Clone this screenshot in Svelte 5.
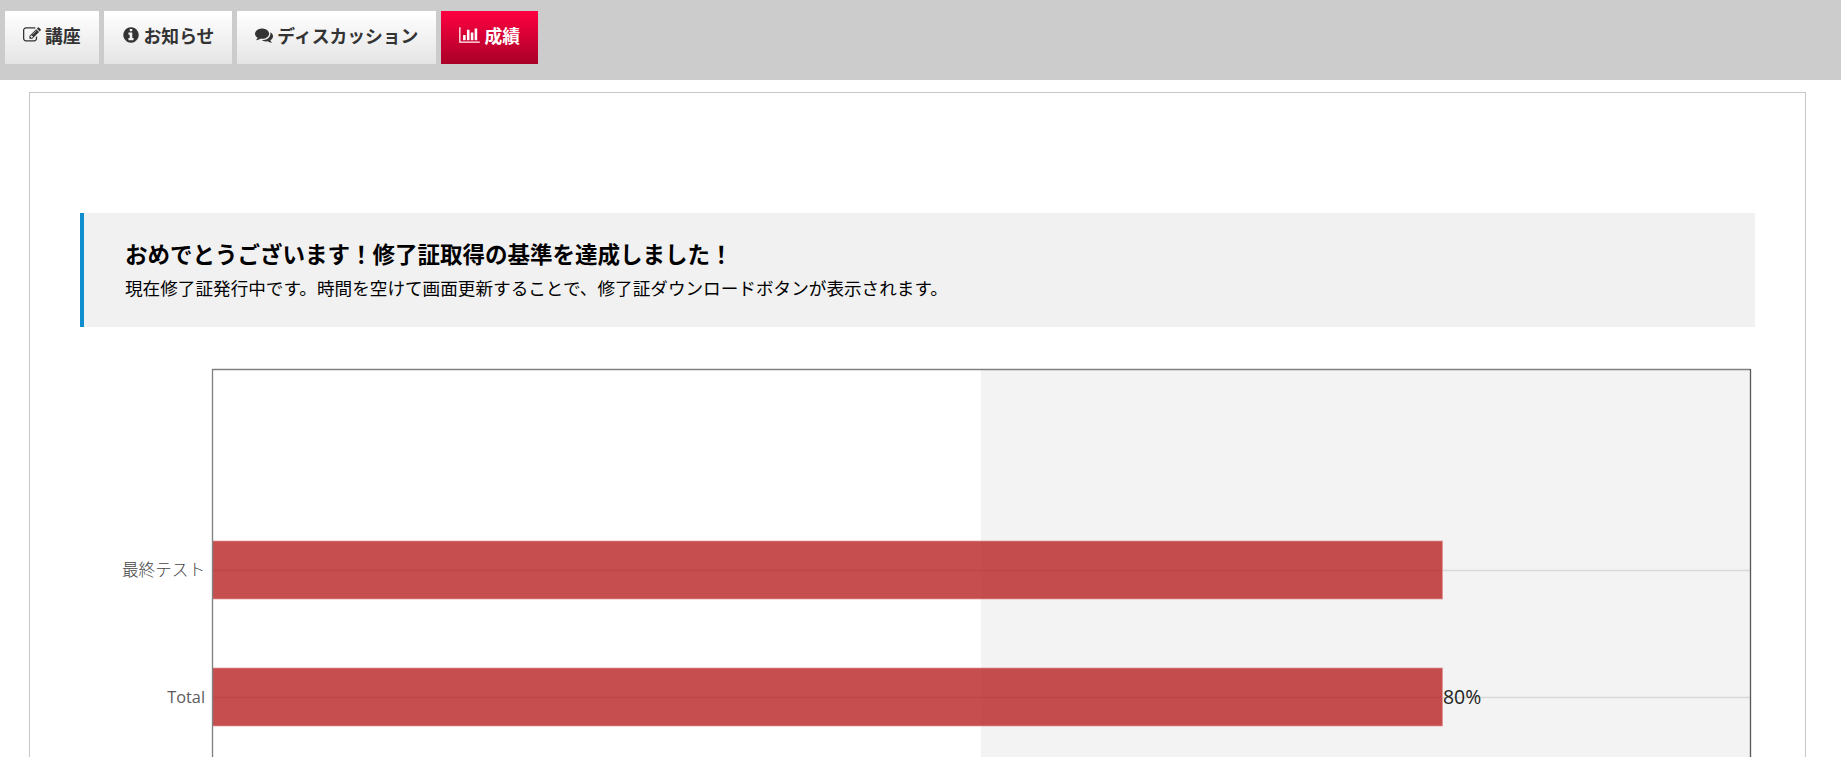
<script>
    const tabs = [
        { label: "講座", icon: "edit" },
        { label: "お知らせ", icon: "info" },
        { label: "ディスカッション", icon: "comments" },
        { label: "成績", icon: "chart", active: true },
    ];

    const icons = {
        edit: { box: "0 0 1792 1792", d: "M888 1184l116-116-152-152-116 116v56h96v96h56zm440-720q-16-16-33 1l-350 350q-17 17-1 33t33-1l350-350q17-17 1-33zm80 594v190q0 119-84.5 203.5t-203.5 84.5h-832q-119 0-203.5-84.5t-84.5-203.5v-832q0-119 84.5-203.5t203.5-84.5h832q63 0 117 25 15 7 18 23 3 17-9 29l-49 49q-14 14-32 8-23-6-45-6h-832q-66 0-113 47t-47 113v832q0 66 47 113t113 47h832q66 0 113-47t47-113v-126q0-13 9-22l64-64q15-15 35-7t20 29zm-96-738l288 288-672 672h-288v-288zm444 132l-92 92-288-288 92-92q28-28 68-28t68 28l152 152q28 28 28 68t-28 68z" },
        info: { box: "0 0 1792 1792", d: "M1152 1376v-160q0-14-9-23t-23-9h-96v-512q0-14-9-23t-23-9h-320q-14 0-23 9t-9 23v160q0 14 9 23t23 9h96v320h-96q-14 0-23 9t-9 23v160q0 14 9 23t23 9h448q14 0 23-9t9-23zm-128-896v-160q0-14-9-23t-23-9h-192q-14 0-23 9t-9 23v160q0 14 9 23t23 9h192q14 0 23-9t9-23zm640 416q0 209-103 385.5t-279.5 279.5-385.5 103-385.5-103-279.5-279.5-103-385.5 103-385.5 279.5-279.5 385.5-103 385.5 103 279.5 279.5 103 385.5z" },
        comments: { box: "0 0 1792 1792", d: "M1408 768q0 139-94 257t-256.5 186.5-353.5 68.5q-86 0-176-16-124 88-278 128-36 9-86 16h-3q-11 0-20.5-8t-11.5-21q-1-3-1-6.5t.5-6.5 2-6l2.5-5 3.5-5.5 4-5 4.5-5 4-4.5q5-6 23-25t26-29.5 22.5-29 25-38.5 20.5-44q-124-72-195-177t-71-224q0-139 94-257t256.5-186.5 353.5-68.5 353.5 68.5 256.5 186.5 94 257zm384 256q0 120-71 224.5t-195 176.5q10 24 20.5 44t25 38.5 22.5 29 26 29.5 23 25q1 1 4 4.5t4.5 5 4 5 3.5 5.5l2.5 5 2 6 .5 6.5-1 6.5q-3 14-13 22t-22 7q-50-7-86-16-154-40-278-128-90 16-176 16-271 0-472-132 58 4 88 4 161 0 309-45t264-129q125-92 192-212t67-254q0-77-23-152 129 71 204 178t75 230z" },
        chart: { box: "0 0 2048 1792", d: "M640 896v512h-256v-512h256zm384-512v1024h-256v-1024h256zm1024 1152v128h-2048v-1536h128v1408h1920zm-640-896v768h-256v-768h256zm384-384v1152h-256v-1152h256z" },
    };

    // chart coordinates, relative to the svg's top left corner
    const plot = { left: 132, right: 1670, top: 42, bottom: 440, mid: 901 };
    const rows = [
        { label: "最終テスト", y: 243, cjk: true },
        { label: "Total", y: 370, value: "80%" },
    ];
    const barEnd = 1362;
</script>

<nav class="tabs">
    {#each tabs as tab}
        <button class="tab" class:active={tab.active}>
            <svg class="icon {tab.icon}" viewBox={icons[tab.icon].box} aria-hidden="true">
                <path d={icons[tab.icon].d} />
            </svg>
            <span>{tab.label}</span>
        </button>
    {/each}
</nav>

<main class="card">
    <section class="notice">
        <h2>おめでとうございます！修了証取得の基準を達成しました！</h2>
        <p>現在修了証発行中です。時間を空けて画面更新することで、修了証ダウンロードボタンが表示されます。</p>
    </section>

    <svg class="chart" width="1675" height="440" viewBox="0 0 1675 440">
        <rect x={plot.mid} y={plot.top} width={plot.right - plot.mid} height={plot.bottom - plot.top} fill="#f3f3f3" />
        {#each rows as row}
            <line class="grid" x1={plot.left} x2={plot.right} y1={row.y + 0.5} y2={row.y + 0.5} />
        {/each}
        {#each rows as row}
            <rect class="bar" x={plot.left + 0.5} y={row.y - 29} width={barEnd - plot.left} height="58" />
            <text class="label" class:cjk={row.cjk} x={plot.left - 7} y={row.y + 6} text-anchor="end">{row.label}</text>
            {#if row.value}
                <text class="value" x={barEnd + 1} y={row.y + 7}>{row.value}</text>
            {/if}
        {/each}
        <path class="frame" d="M{plot.left + 0.5} {plot.bottom}V{plot.top + 0.5}H{plot.right + 0.5}" />
        <path class="frame right" d="M{plot.right + 0.5} {plot.top}V{plot.bottom}" />
    </svg>
</main>

<style>
    :global(body) {
        margin: 0;
        height: 757px;
        overflow: hidden;
        background: #fff;
        font-family: "Open Sans", "Noto Sans CJK JP", sans-serif;
    }

    .tabs {
        display: flex;
        gap: 5px;
        height: 53px;
        padding: 11px 5px 16px;
        background: #ccc;
    }

    .tab {
        display: flex;
        align-items: center;
        gap: 4px;
        padding: 0 18px 6px;
        border: 0;
        background: linear-gradient(#fff, #e5e5e5);
        color: #333;
        font-family: "Noto Sans CJK JP", sans-serif;
        font-size: 17.8px;
        font-weight: 700;
    }

    .tab.active {
        background: linear-gradient(#ff0040, #a80028);
        color: #fff;
    }

    .icon {
        width: 18px;
        height: 18px;
        fill: currentColor;
    }

    .icon.chart {
        width: 21px;
    }

    .card {
        margin: 12px 35px 0 29px;
        padding: 120px 50px 0;
        border: 1px solid #c8c8c8;
    }

    .notice {
        box-sizing: border-box;
        height: 114px;
        padding: 25px 41px 0;
        border-left: 4px solid #0f8fce;
        background: #f1f1f1;
        color: #000;
        font-family: "Noto Sans CJK JP", sans-serif;
    }

    .notice h2 {
        margin: 0;
        font-size: 22.5px;
        line-height: 30px;
        font-weight: 700;
    }

    .notice p {
        margin: 6px 0 0;
        font-size: 17.63px;
        line-height: 28px;
        font-weight: 400;
    }

    .chart {
        display: block;
    }

    .grid {
        stroke: #d8d8d8;
        stroke-width: 1.33;
    }

    .frame {
        fill: none;
        stroke: #808080;
        stroke-width: 1.33;
    }

    .frame.right {
        stroke: #5a5a5a;
    }

    .bar {
        fill: rgba(183, 28, 28, 0.78);
        stroke: rgba(230, 150, 150, 0.7);
    }

    .label {
        fill: #5c5c5c;
        font-size: 16.3px;
        font-family: "Open Sans", sans-serif;
    }

    .label.cjk {
        font-family: "Noto Sans CJK JP", sans-serif;
        font-weight: 300;
        font-size: 16.6px;
        fill: #444;
    }

    .value {
        fill: #222;
        font-size: 19.4px;
        font-family: "Open Sans", sans-serif;
    }
</style>
